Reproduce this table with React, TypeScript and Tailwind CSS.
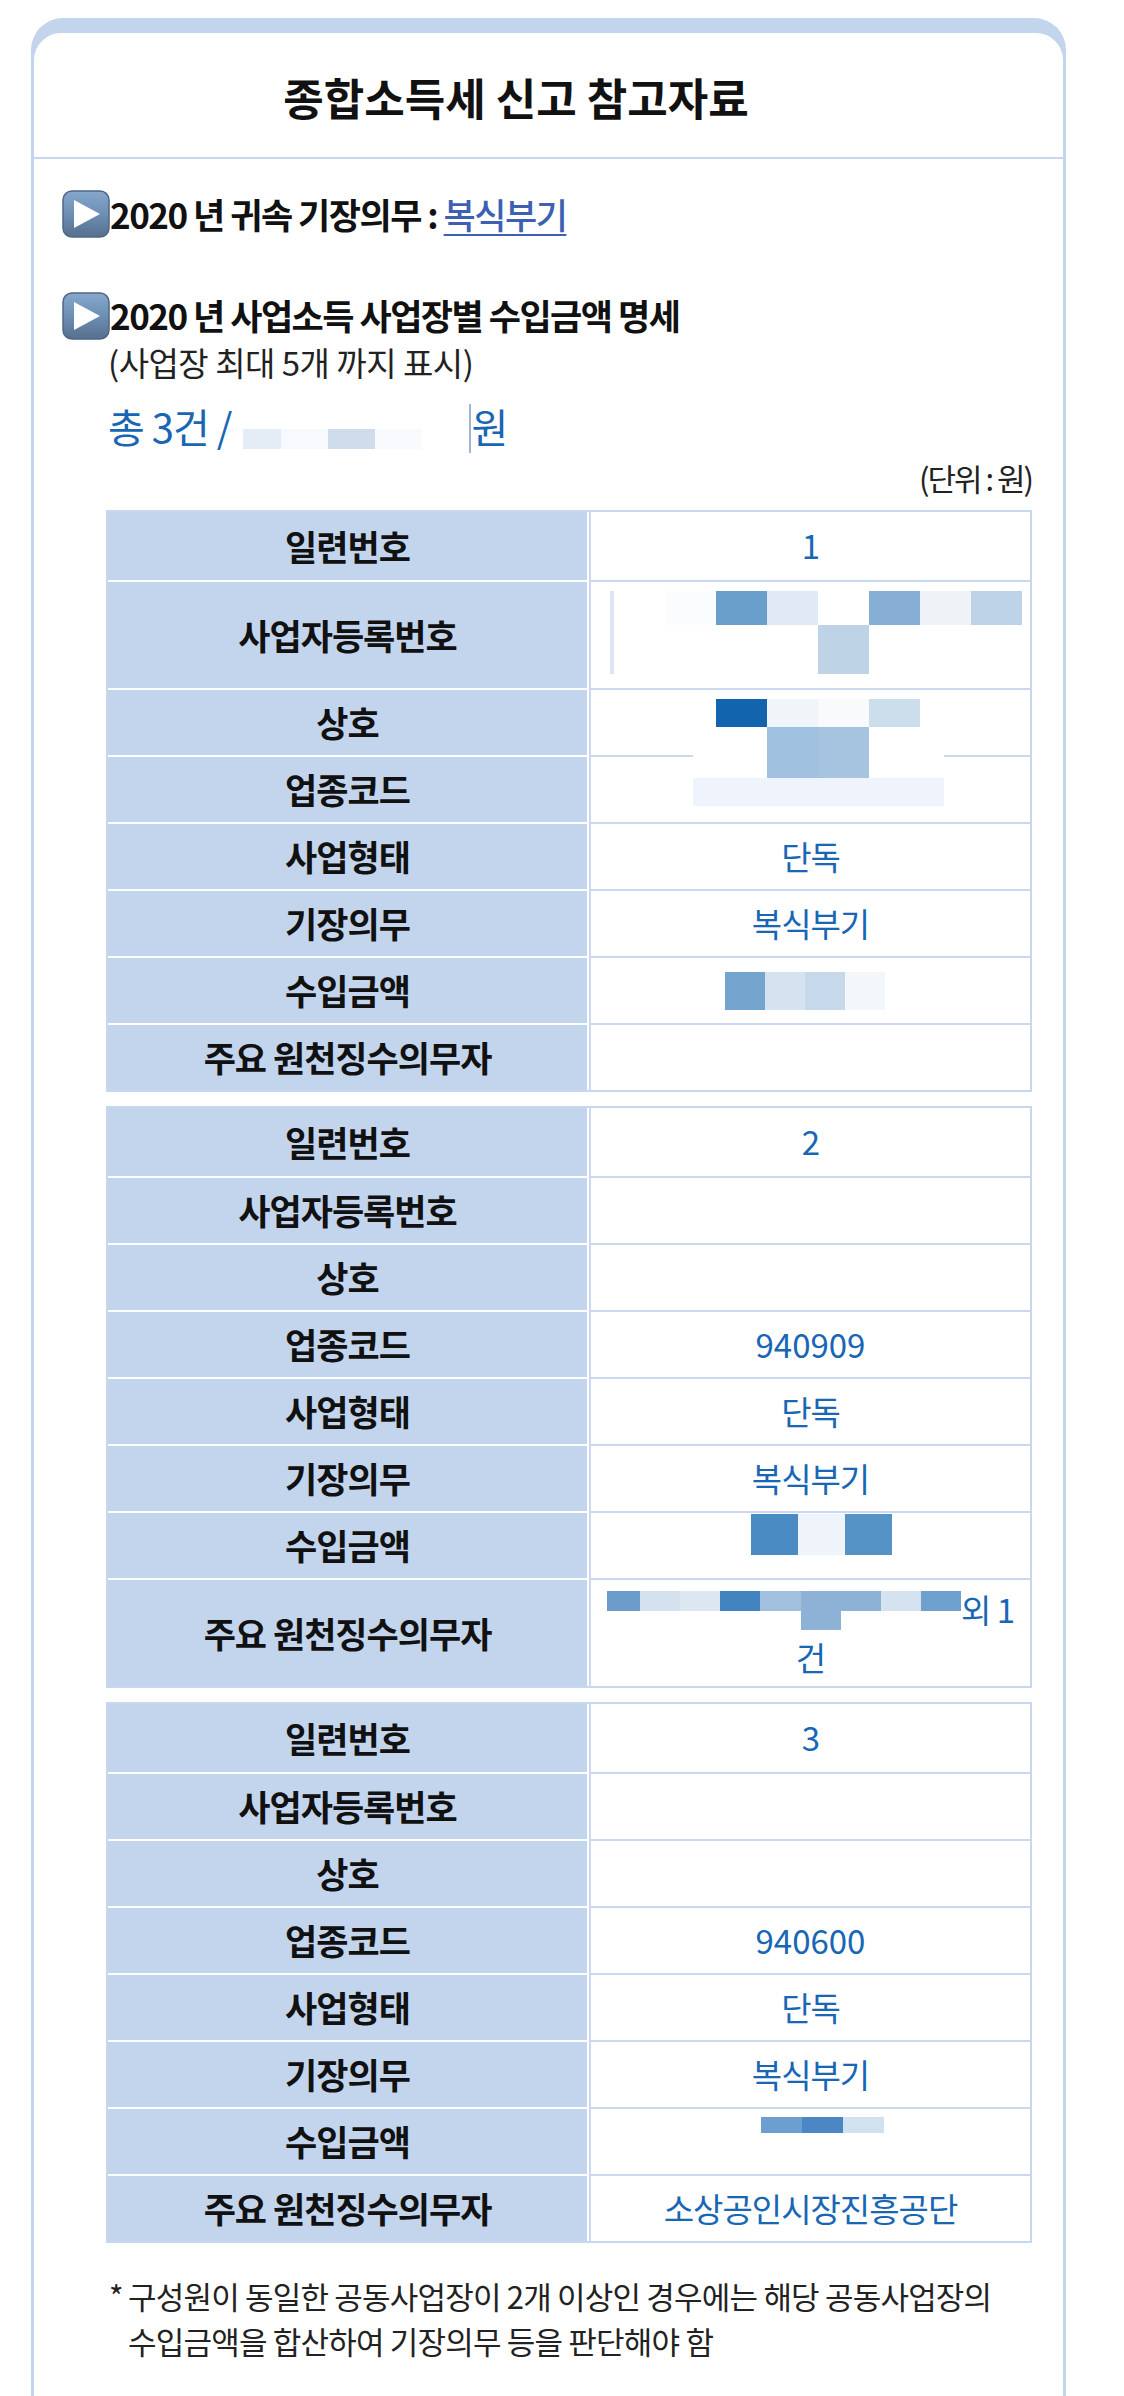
import type { ReactNode } from 'react';

type Cell = { w: string; h: string; bg?: string };

function Blocks({ cells, className = '' }: { cells: Cell[]; className?: string }) {
  return (
    <div className={`flex items-start ${className}`}>
      {cells.map((c, i) => (
        <div key={i} className={`${c.w} ${c.h} shrink-0 ${c.bg ?? ''}`} />
      ))}
    </div>
  );
}

function Row({
  label,
  first = false,
  h = 'h-[67px]',
  valueClass = 'flex items-center justify-center',
  children,
}: {
  label: string;
  first?: boolean;
  h?: string;
  valueClass?: string;
  children?: ReactNode;
}) {
  return (
    <div className={`flex ${h}`}>
      <div
        className={`flex w-[479px] shrink-0 items-center justify-center bg-[#c3d5ed] text-[35px] font-bold tracking-[-1px] text-[#111] ${
          first ? '' : 'border-t-2 border-white'
        }`}
      >
        {label}
      </div>
      <div
        className={`relative ml-[2px] flex-1 border-l-2 border-[#cad9ef] text-[33px] tracking-[-1px] text-[#1866b4] ${
          first ? '' : 'border-t-2'
        } ${valueClass}`}
      >
        {children}
      </div>
    </div>
  );
}

function PlayIcon() {
  return (
    <svg width="48" height="48" viewBox="0 0 48 48" className="shrink-0">
      <defs>
        <linearGradient id="pg" x1="0" y1="0" x2="0" y2="1">
          <stop offset="0" stopColor="#86a8cc" />
          <stop offset="0.5" stopColor="#6d8fb4" />
          <stop offset="1" stopColor="#566f8c" />
        </linearGradient>
      </defs>
      <rect x="1" y="1" width="46" height="46" rx="9" fill="url(#pg)" stroke="#4f6784" strokeWidth="1.5" />
      <path d="M12 10 L38 24 L12 38 Z" fill="#ffffff" />
    </svg>
  );
}

function Table({ children, className = '' }: { children: ReactNode; className?: string }) {
  return <div className={`ml-[44px] border-2 border-[#c6d7ee] bg-white ${className}`}>{children}</div>;
}

export default function App() {
  return (
    <div className="min-h-screen bg-white font-['Noto_Sans_CJK_KR','Noto_Sans',sans-serif]">
      <div className="ml-[31px] w-[1035px] pt-[18px]">
        <div className="rounded-t-[32px] bg-[#c3d5ed] px-[3px] pt-[15px]">
          <div className="rounded-t-[27px] bg-white">
            {/* title */}
            <div className="flex h-[126px] items-center justify-center border-b-2 border-[#c6d7ee] pr-[65px] pt-[4px] text-[44px] font-bold text-[#111]">
              종합소득세 신고 참고자료
            </div>

            <div className="pb-[70px] pl-[28px] pr-[31px] pt-[31px]">
              {/* bullet 1 */}
              <div className="flex h-[48px] items-center">
                <PlayIcon />
                <span className="whitespace-nowrap text-[35px] font-bold tracking-[-1.5px] text-[#111]">
                  2020 년 귀속 기장의무 :{' '}
                  <span className="font-medium text-[#3d60b3] underline decoration-2 underline-offset-[5px]">복식부기</span>
                </span>
              </div>

              {/* bullet 2 */}
              <div className="mt-[54px] flex h-[47px] items-center">
                <PlayIcon />
                <span className="whitespace-nowrap text-[35px] font-bold tracking-[-1.5px] text-[#111]">
                  2020 년 사업소득 사업장별 수입금액 명세
                </span>
              </div>
              <div className="h-[46px] pl-[46px] text-[33px] leading-[46px] tracking-[-0.5px] text-[#222]">
                (사업장 최대 5개 까지 표시)
              </div>

              {/* total */}
              <div className="mt-[8px] flex h-[66px] items-center pl-[46px] text-[40px] tracking-[-1px] text-[#1866b4]">
                <span className="whitespace-nowrap">총 3건 /</span>
                <Blocks
                  className="ml-[12px] mt-[26px]"
                  cells={[
                    { w: 'w-[38px]', h: 'h-[20px]', bg: 'bg-[#e4ecf6]' },
                    { w: 'w-[47px]', h: 'h-[20px]', bg: 'bg-[#f7f9fc]' },
                    { w: 'w-[47px]', h: 'h-[20px]', bg: 'bg-[#cfdcec]' },
                    { w: 'w-[47px]', h: 'h-[20px]', bg: 'bg-[#f8fafd]' },
                  ]}
                />
                <div className="ml-[47px] mt-[4px] h-[49px] w-[2px] bg-[#9fb6d3]" />
                <span>원</span>
              </div>

              {/* unit */}
              <div className="flex h-[38px] items-center justify-end text-[31px] tracking-[-2px] text-[#222]">(단위 : 원)</div>

              {/* table 1 */}
              <Table className="mt-[13px]">
                <Row label="일련번호" first h="h-[68px]">
                  1
                </Row>
                <Row label="사업자등록번호" h="h-[108px]" valueClass="flex items-start pl-[19px] pt-[9px]">
                  <div className="h-[83px] w-[4px] bg-[#dde7f3]" />
                  <div className="ml-[51px]">
                    <Blocks
                      cells={[
                        { w: 'w-[51px]', h: 'h-[34px]', bg: 'bg-[#fbfcfd]' },
                        { w: 'w-[51px]', h: 'h-[34px]', bg: 'bg-[#6a9ecb]' },
                        { w: 'w-[51px]', h: 'h-[34px]', bg: 'bg-[#e1eaf4]' },
                        { w: 'w-[51px]', h: 'h-[34px]' },
                        { w: 'w-[51px]', h: 'h-[34px]', bg: 'bg-[#87afd5]' },
                        { w: 'w-[51px]', h: 'h-[34px]', bg: 'bg-[#eff3f8]' },
                        { w: 'w-[51px]', h: 'h-[34px]', bg: 'bg-[#bed3e7]' },
                      ]}
                    />
                    <Blocks
                      cells={[
                        { w: 'w-[153px]', h: 'h-[49px]' },
                        { w: 'w-[51px]', h: 'h-[49px]', bg: 'bg-[#bed3e6]' },
                      ]}
                    />
                  </div>
                </Row>
                <Row label="상호">
                  <div className="absolute left-[102px] top-[9px] z-10 w-[251px] bg-white">
                    <Blocks
                      cells={[
                        { w: 'w-[23px]', h: 'h-[28px]' },
                        { w: 'w-[51px]', h: 'h-[28px]', bg: 'bg-[#1164ad]' },
                        { w: 'w-[51px]', h: 'h-[28px]', bg: 'bg-[#f0f5fa]' },
                        { w: 'w-[51px]', h: 'h-[28px]', bg: 'bg-[#f8fafc]' },
                        { w: 'w-[51px]', h: 'h-[28px]', bg: 'bg-[#ccdeec]' },
                      ]}
                    />
                    <Blocks
                      cells={[
                        { w: 'w-[74px]', h: 'h-[51px]' },
                        { w: 'w-[51px]', h: 'h-[51px]', bg: 'bg-[#9fc0de]' },
                        { w: 'w-[51px]', h: 'h-[51px]', bg: 'bg-[#a6c4e0]' },
                      ]}
                    />
                    <div className="h-[28px] w-[251px] bg-[#eff3fb]" />
                  </div>
                </Row>
                <Row label="업종코드" />
                <Row label="사업형태">단독</Row>
                <Row label="기장의무">복식부기</Row>
                <Row label="수입금액">
                  <Blocks
                    className="mr-[12px]"
                    cells={[
                      { w: 'w-[40px]', h: 'h-[38px]', bg: 'bg-[#74a5cf]' },
                      { w: 'w-[40px]', h: 'h-[38px]', bg: 'bg-[#d5e3f0]' },
                      { w: 'w-[40px]', h: 'h-[38px]', bg: 'bg-[#c6d9ea]' },
                      { w: 'w-[40px]', h: 'h-[38px]', bg: 'bg-[#f4f7fa]' },
                    ]}
                  />
                </Row>
                <Row label="주요 원천징수의무자" />
              </Table>

              {/* table 2 */}
              <Table className="mt-[14px]">
                <Row label="일련번호" first h="h-[68px]">
                  2
                </Row>
                <Row label="사업자등록번호" />
                <Row label="상호" />
                <Row label="업종코드" valueClass="flex items-center justify-center tracking-[0px]">
                  940909
                </Row>
                <Row label="사업형태">단독</Row>
                <Row label="기장의무">복식부기</Row>
                <Row label="수입금액" valueClass="flex items-start justify-center pt-[1px]">
                  <Blocks
                    className="ml-[21px]"
                    cells={[
                      { w: 'w-[47px]', h: 'h-[41px]', bg: 'bg-[#4a8bc3]' },
                      { w: 'w-[47px]', h: 'h-[41px]', bg: 'bg-[#eef4f9]' },
                      { w: 'w-[47px]', h: 'h-[41px]', bg: 'bg-[#5593c7]' },
                    ]}
                  />
                </Row>
                <Row label="주요 원천징수의무자" h="h-[108px]" valueClass="flex flex-col items-center justify-center">
                  <div className="flex items-start">
                    <Blocks
                      cells={[
                        { w: 'w-[33px]', h: 'h-[20px]', bg: 'bg-[#6b9ccb]' },
                        { w: 'w-[40px]', h: 'h-[20px]', bg: 'bg-[#d4e2ef]' },
                        { w: 'w-[40px]', h: 'h-[20px]', bg: 'bg-[#dde7f1]' },
                        { w: 'w-[40px]', h: 'h-[20px]', bg: 'bg-[#4383c0]' },
                        { w: 'w-[41px]', h: 'h-[20px]', bg: 'bg-[#a0c0de]' },
                        { w: 'w-[40px]', h: 'h-[39px]', bg: 'bg-[#8db2d6]' },
                        { w: 'w-[40px]', h: 'h-[20px]', bg: 'bg-[#8db2d6]' },
                        { w: 'w-[40px]', h: 'h-[20px]', bg: 'bg-[#d5e3f0]' },
                        { w: 'w-[40px]', h: 'h-[20px]', bg: 'bg-[#6ea1cf]' },
                      ]}
                    />
                    <span className="whitespace-nowrap leading-[36px]">외 1</span>
                  </div>
                  <span className="mt-[9px] leading-[36px]">건</span>
                </Row>
              </Table>

              {/* table 3 */}
              <Table className="mt-[14px]">
                <Row label="일련번호" first h="h-[68px]">
                  3
                </Row>
                <Row label="사업자등록번호" />
                <Row label="상호" />
                <Row label="업종코드" valueClass="flex items-center justify-center tracking-[0px]">
                  940600
                </Row>
                <Row label="사업형태">단독</Row>
                <Row label="기장의무">복식부기</Row>
                <Row label="수입금액" valueClass="flex items-start justify-center pt-[8px]">
                  <Blocks
                    className="ml-[24px]"
                    cells={[
                      { w: 'w-[41px]', h: 'h-[16px]', bg: 'bg-[#6a9fd0]' },
                      { w: 'w-[41px]', h: 'h-[16px]', bg: 'bg-[#4a87c3]' },
                      { w: 'w-[41px]', h: 'h-[16px]', bg: 'bg-[#d2e1ef]' },
                    ]}
                  />
                </Row>
                <Row label="주요 원천징수의무자">소상공인시장진흥공단</Row>
              </Table>

              {/* footnote */}
              <div className="mt-[30px] flex pl-[47px] text-[31px] leading-[45px] tracking-[-0.8px] text-[#222]">
                <span className="w-[19px] shrink-0">*</span>
                <div className="whitespace-nowrap">
                  구성원이 동일한 공동사업장이 2개 이상인 경우에는 해당 공동사업장의
                  <br />
                  수입금액을 합산하여 기장의무 등을 판단해야 함
                </div>
              </div>
            </div>
          </div>
        </div>
      </div>
    </div>
  );
}
